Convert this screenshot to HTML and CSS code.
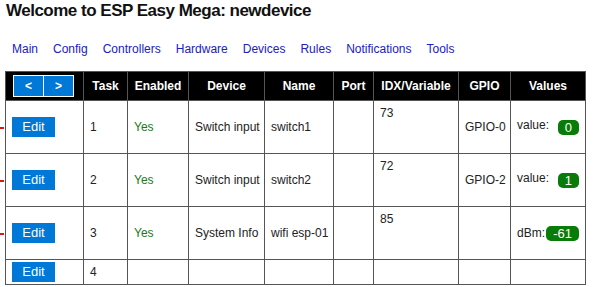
FILE: index.html
```html
<!DOCTYPE html>
<html lang="en">
<head>
    <meta charset="UTF-8">
    <title>ESP Easy Mega: newdevice</title>
    <link rel="stylesheet" href="styles.css">
</head>
<body>
    <h1>Welcome to ESP Easy Mega: newdevice</h1>

    <nav class="menu">
        <a href="#">Main</a>
        <a href="#">Config</a>
        <a href="#">Controllers</a>
        <a href="#">Hardware</a>
        <a href="#">Devices</a>
        <a href="#">Rules</a>
        <a href="#">Notifications</a>
        <a href="#">Tools</a>
    </nav>

    <table class="tasks">
        <tr class="head">
            <th class="c-edit"><span class="pager"><a href="#">&lt;</a><a href="#">&gt;</a></span></th>
            <th class="c-task">Task</th>
            <th class="c-enabled">Enabled</th>
            <th class="c-device">Device</th>
            <th class="c-name">Name</th>
            <th class="c-port">Port</th>
            <th class="c-idx">IDX/Variable</th>
            <th class="c-gpio">GPIO</th>
            <th class="c-values">Values</th>
        </tr>
        <tr class="row mark">
            <td><a class="btn" href="#">Edit</a></td>
            <td>1</td>
            <td class="yes">Yes</td>
            <td>Switch input</td>
            <td>switch1</td>
            <td></td>
            <td class="idx"><span>73</span></td>
            <td>GPIO-0</td>
            <td class="vals"><span class="label">value:</span><span class="pill">0</span></td>
        </tr>
        <tr class="row mark">
            <td><a class="btn" href="#">Edit</a></td>
            <td>2</td>
            <td class="yes">Yes</td>
            <td>Switch input</td>
            <td>switch2</td>
            <td></td>
            <td class="idx"><span>72</span></td>
            <td>GPIO-2</td>
            <td class="vals"><span class="label">value:</span><span class="pill">1</span></td>
        </tr>
        <tr class="row mark">
            <td><a class="btn" href="#">Edit</a></td>
            <td>3</td>
            <td class="yes">Yes</td>
            <td>System Info</td>
            <td>wifi esp-01</td>
            <td></td>
            <td class="idx"><span>85</span></td>
            <td></td>
            <td class="vals dbm"><span class="label">dBm:</span><span class="pill">-61</span></td>
        </tr>
        <tr class="row empty">
            <td><a class="btn" href="#">Edit</a></td>
            <td>4</td>
            <td></td>
            <td></td>
            <td></td>
            <td></td>
            <td></td>
            <td></td>
            <td></td>
        </tr>
    </table>
</body>
</html>
```

FILE: styles.css
```css
body {
    font-family: "Liberation Sans", Arial, sans-serif;
    margin: 0;
    padding: 0 5px;
    background-color: #fff;
    color: #000;
}

h1 {
    font-size: 17px;
    letter-spacing: -0.5px;
    font-weight: bold;
    margin: 0;
    padding: 0 0 0 1px;
    line-height: 22px;
    color: #111;
}

.menu {
    display: flex;
    gap: 15px;
    margin-top: 19px;
    padding-left: 7px;
    font-size: 12px;
    line-height: 16px;
}

.menu a {
    color: #2020c0;
    text-decoration: none;
}

.tasks {
    margin-top: 14px;
    border-collapse: collapse;
    width: 581px;
    font-size: 12px;
    table-layout: fixed;
}

.tasks th,
.tasks td {
    border: 1px solid #555;
    padding: 0 6px;
}

.head th {
    background-color: #000;
    color: #fff;
    font-weight: bold;
    height: 28px;
    text-align: center;
    padding: 0;
}

.c-edit { width: 77px; }
.c-task { width: 43px; }
.c-enabled { width: 60px; }
.c-device { width: 75px; }
.c-name { width: 68px; }
.c-port { width: 39px; }
.c-idx { width: 84px; }
.c-gpio { width: 51px; }
.c-values { width: 74px; }

.pager {
    display: inline-flex;
    gap: 1px;
    background-color: #fff;
    padding: 1px;
    margin-left: -2px;
}

.pager a {
    display: block;
    width: 29px;
    height: 20px;
    line-height: 20px;
    background-color: #0078d7;
    color: #fff;
    text-decoration: none;
    font-weight: bold;
    font-size: 12px;
}

.row td {
    height: 52px;
    vertical-align: middle;
    color: #222;
    white-space: nowrap;
}

.row.empty td {
    height: 24px;
}

.mark td:first-child {
    position: relative;
}

.mark td:first-child::before {
    content: "";
    position: absolute;
    left: -6px;
    top: 50%;
    width: 4px;
    height: 2px;
    background-color: #d81818;
}

.btn {
    display: inline-block;
    width: 43px;
    height: 20px;
    line-height: 20px;
    background-color: #0078d7;
    color: #fff;
    text-align: center;
    text-decoration: none;
    font-size: 13px;
}

.yes {
    color: #1a7a1a !important;
}

.tasks td.idx {
    vertical-align: top;
}

.idx span {
    display: block;
    margin-top: 5px;
}

.vals .label {
    position: relative;
    top: -2px;
}

.pill {
    float: right;
    background-color: #087b08;
    color: #fff;
    border-radius: 5px;
    padding: 0 7px;
    line-height: 15px;
    font-size: 13px;
}

.dbm .label {
    top: 0;
}
```
